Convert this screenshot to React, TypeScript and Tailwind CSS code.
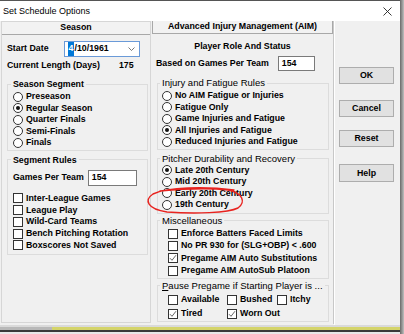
import type { ReactNode } from "react";

function Radio({ label, checked = false }: { label: string; checked?: boolean }) {
  return (
    <div className="flex items-center h-[11.5px]">
      <span className="w-[10px] h-[10px] rounded-full border border-[#333] bg-white flex items-center justify-center shrink-0">
        {checked && <span className="w-[4px] h-[4px] rounded-full bg-[#111]" />}
      </span>
      <span className="ml-[3px] whitespace-nowrap">{label}</span>
    </div>
  );
}

function Check({
  label,
  checked = false,
  className = "",
}: {
  label: ReactNode;
  checked?: boolean;
  className?: string;
}) {
  return (
    <div className={`flex items-center ${className}`}>
      <span className="w-[10px] h-[10px] border border-[#333] bg-white flex items-center justify-center shrink-0">
        {checked && (
          <svg width="8" height="8" viewBox="0 0 8 8">
            <path d="M1 4.2 L3 6.3 L7 1.2" fill="none" stroke="#555" strokeWidth="0.9" />
          </svg>
        )}
      </span>
      <span className="ml-[3px] whitespace-nowrap">{label}</span>
    </div>
  );
}

function Group({
  title,
  titleClass = "",
  className = "",
  bodyClass = "",
  children,
}: {
  title: ReactNode;
  titleClass?: string;
  className?: string;
  bodyClass?: string;
  children: ReactNode;
}) {
  return (
    <fieldset className={`border border-[#dcdcdc] ${className}`}>
      <legend className={`ml-[2px] px-[2px] leading-[12px] whitespace-nowrap ${titleClass}`}>{title}</legend>
      <div className={bodyClass}>{children}</div>
    </fieldset>
  );
}

function Button({ label, className = "" }: { label: string; className?: string }) {
  return (
    <button className={`w-[55px] h-[17px] bg-[#e1e1e1] border border-[#adadad] font-bold leading-[15px] ${className}`}>
      {label}
    </button>
  );
}

// AIM group titles are drawn in the regular weight, a bit larger
const plainTitle = "font-normal text-[9.5px] text-black";

export default function App() {
  return (
    <div className="relative w-[404px] h-[334px] bg-white overflow-hidden flex font-['Liberation_Sans',Arial,sans-serif] text-[8.8px] text-black">
      <div className="w-[400px] flex flex-col">
        {/* title bar */}
        <div className="h-[21px] border-t border-[#555] bg-white flex items-center justify-between pl-[3px] pr-[8px]">
          <span className="text-[9px] leading-[12px]">Set Schedule Options</span>
          <svg width="9" height="9" viewBox="0 0 9 9">
            <path d="M0.5 0.5 L8.5 8.5 M8.5 0.5 L0.5 8.5" stroke="#222" strokeWidth="0.9" />
          </svg>
        </div>

        {/* body */}
        <div className="h-[304px] bg-[#f0f0f0] flex font-bold">
          {/* Season column */}
          <div className="ml-[1px] w-[150px] h-[302px] border border-[#d6d6d6] flex flex-col">
            <div className="h-[13px] border-b border-[#a8a8a8] bg-[#f2f2f2] flex items-center justify-center">
              Season
            </div>
            <div className="mt-[6px] h-[16px] flex items-center pl-[5px]">
              <span>Start Date</span>
              <div className="ml-[15px] w-[76px] h-[16px] bg-white border border-[#6a9ad8] flex items-center pl-[3px] pr-[4px]">
                <span className="bg-[#0078d7] text-white px-[1px]">4</span>
                <span>/10/1961</span>
                <svg className="ml-auto" width="7" height="4" viewBox="0 0 7 4">
                  <path d="M0.5 0.5 L3.5 3.5 L6.5 0.5" fill="none" stroke="#555" strokeWidth="0.8" />
                </svg>
              </div>
            </div>
            <div className="mt-[3px] h-[12px] flex items-center pl-[5px]">
              <span>Current Length (Days)</span>
              <span className="ml-[19px]">175</span>
            </div>

            <Group
              title="Season Segment"
              titleClass="ml-[3px]"
              className="mt-[6px] ml-[5px] mr-[2px]"
              bodyClass="pl-[5px] pt-[1px] pb-[1px]"
            >
              <Radio label="Preseason" />
              <Radio label="Regular Season" checked />
              <Radio label="Quarter Finals" />
              <Radio label="Semi-Finals" />
              <Radio label="Finals" />
            </Group>

            <Group
              title="Segment Rules"
              titleClass="ml-[3px]"
              className="mt-[3px] ml-[5px] mr-[2px]"
              bodyClass="pl-[5px] pb-[3px]"
            >
              <div className="mt-[4px] h-[16px] flex items-center">
                <span>Games Per Team</span>
                <div className="ml-[4px] w-[49px] h-[16px] bg-white border border-[#7a7a7a] flex items-center pl-[3px]">
                  154
                </div>
              </div>
              <div className="mt-[7px]">
                <Check label="Inter-League Games" className="h-[11.75px]" />
                <Check label="League Play" className="h-[11.75px]" />
                <Check label="Wild-Card Teams" className="h-[11.75px]" />
                <Check label="Bench Pitching Rotation" className="h-[11.75px]" />
                <Check label="Boxscores Not Saved" className="h-[11.75px]" />
              </div>
            </Group>
          </div>

          {/* AIM column */}
          <div className="ml-[1px] w-[182px] h-[303px] border-r border-[#c8c8c8] flex flex-col">
            <div className="h-[13px] border border-t-0 border-[#a8a8a8] bg-[#f2f2f2] flex items-center justify-center">
              Advanced Injury Management (AIM)
            </div>
            <div className="mt-[7px] h-[12px] flex items-center justify-center">Player Role And Status</div>
            <div className="mt-[3px] h-[15px] flex items-center pl-[4px]">
              <span>Based on Games Per Team</span>
              <div className="ml-[9px] w-[37px] h-[15px] bg-white border border-[#7a7a7a] flex items-center pl-[3px]">
                154
              </div>
            </div>

            <Group
              title="Injury and Fatigue Rules"
              titleClass={plainTitle}
              className="mt-[6px] ml-[5px] mr-[4px]"
              bodyClass="pl-[4px] pt-[1px] pb-[1px]"
            >
              <Radio label="No AIM Fatigue or Injuries" />
              <Radio label="Fatigue Only" />
              <Radio label="Game Injuries and Fatigue" />
              <Radio label="All Injuries and Fatigue" checked />
              <Radio label="Reduced Injuries and Fatigue" />
            </Group>

            <Group
              title="Pitcher Durability and Recovery"
              titleClass={plainTitle}
              className="mt-[3px] ml-[5px] mr-[4px]"
              bodyClass="pl-[4px] pb-[2px]"
            >
              <Radio label="Late 20th Century" checked />
              <Radio label="Mid 20th Century" />
              <Radio label="Early 20th Century" />
              <Radio label="19th Century" />
            </Group>

            <Group
              title="Miscellaneous"
              titleClass={plainTitle}
              className="mt-[1px] ml-[5px] mr-[4px]"
              bodyClass="pl-[10px] pt-[1px] pb-[1px]"
            >
              <Check label="Enforce Batters Faced Limits" className="h-[12.3px]" />
              <Check label="No PR 930 for (SLG+OBP) < .600" className="h-[12.3px]" />
              <Check label="Pregame AIM Auto Substitutions" checked className="h-[12.3px]" />
              <Check label="Pregame AIM AutoSub Platoon" className="h-[12.3px]" />
            </Group>

            <Group
              title={
                <span>
                  <span className="underline">P</span>ause Pregame if Starting Player is ...
                </span>
              }
              titleClass={plainTitle}
              className="mt-[1px] ml-[5px] mr-[4px]"
              bodyClass="pl-[10px] pt-[1px] grid grid-cols-[59px_50px_auto]"
            >
              <Check label="Available" className="h-[14px]" />
              <Check label="Bushed" className="h-[14px]" />
              <Check label="Itchy" className="h-[14px]" />
              <Check label="Tired" checked className="h-[14px]" />
              <Check label="Worn Out" checked className="h-[14px]" />
            </Group>
          </div>

          {/* buttons */}
          <div className="w-[66px] border-l border-white flex flex-col items-start pl-[4px]">
            <Button label="OK" className="mt-[46px]" />
            <Button label="Cancel" className="mt-[16px]" />
            <Button label="Reset" className="mt-[13px]" />
            <Button label="Help" className="mt-[17px] h-[18px]" />
          </div>
        </div>

        {/* bottom edge of window and what lies behind */}
        <div className="h-[2px] bg-[#dadada]" />
        <div className="h-[3px] flex">
          <div className="w-[52px] bg-[#b8b8b8]" />
          <div className="flex-1 bg-[#d4d46a]" />
        </div>
        <div className="h-[2px] bg-[#3a3a3a]" />
        <div className="flex-1 bg-[#e8e8e8]" />
      </div>
      <div className="w-[4px] bg-gradient-to-r from-[#6a6a6a] to-[#c0c0c0]" />

      {/* hand-drawn red mark */}
      <svg className="absolute left-0 top-0 pointer-events-none" width="404" height="334" viewBox="0 0 404 334">
        <path
          d="M234 190 C205 186 168 187 153 194 C144 200 147 209 167 212 C195 214 228 213 238 208 C246 202 243 193 228 190 C210 188 182 189 160 191"
          fill="none"
          stroke="#e8231f"
          strokeWidth="1.4"
          strokeLinecap="round"
        />
      </svg>
    </div>
  );
}
